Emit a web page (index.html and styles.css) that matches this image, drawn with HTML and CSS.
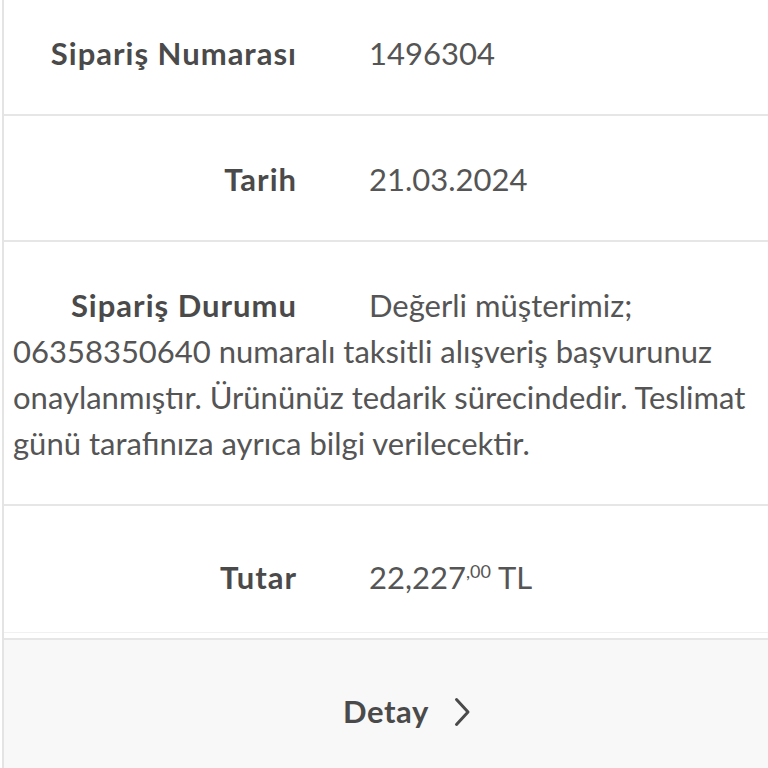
FILE: index.html
```html
<!DOCTYPE html>
<html lang="tr">
<head>
<meta charset="utf-8">
<link rel="stylesheet" href="styles.css">
</head>
<body>
<div class="card">
  <div class="row first">
    <span class="label">Sipariş Numarası</span><span class="value">1496304</span>
  </div>
  <div class="row">
    <span class="label">Tarih</span><span class="value">21.03.2024</span>
  </div>
  <div class="row">
    <span class="label">Sipariş Durumu</span><span class="value">Değerli müşterimiz;</span> <span class="value">06358350640 numaralı taksitli alışveriş başvurunuz onaylanmıştır. Ürününüz tedarik sürecindedir. Teslimat günü tarafınıza ayrıca bilgi verilecektir.</span>
  </div>
  <div class="row total">
    <span class="label">Tutar</span><span class="value">22,227<sup class="cents">,00</sup> TL</span>
  </div>
  <div class="footer">
    <span class="detail">Detay</span>
    <svg class="chev" width="17" height="30" viewBox="0 0 17 30"><path d="M2.5 2.5 L14 15 L2.5 27.5" fill="none" stroke="#4a4a4a" stroke-width="3" stroke-linecap="round" stroke-linejoin="round"/></svg>
  </div>
</div>
</body>
</html>
```

FILE: styles.css
```css
html, body {
  margin: 0;
  padding: 0;
  background: #ffffff;
}
body {
  font-family: "Lato", "Liberation Sans", sans-serif;
  color: #4f4f4f;
  overflow: hidden;
}
.card {
  margin-top: -10px;
  margin-left: 2px;
  border-left: 2px solid #e4e4e4;
}
.row {
  padding: 40px 2px 38px 9px;
  font-size: 31px;
  line-height: 46px;
  border-bottom: 2px solid #e6e6e6;
}
.label {
  display: inline-block;
  width: 283px;
  text-align: right;
  font-weight: 700;
  color: #4a4a4a;
  margin-right: 73px;
  letter-spacing: 1px;
}
.label::after {
  content: "";
  margin-right: -1px;
}
.value {
  color: #555555;
}
.cents {
  font-size: 18px;
  line-height: 0;
  vertical-align: 11px;
}
.total {
  padding-top: 48px;
  padding-bottom: 32px;
  border-bottom: 1px solid #f1f1f1;
  margin-bottom: 5px;
}
.footer {
  background: #f8f8f8;
  border-top: 2px solid #e6e6e6;
  height: 140px;
  display: flex;
  align-items: flex-start;
  justify-content: center;
  padding-top: 51px;
  padding-left: 42px;
  box-sizing: border-box;
  gap: 25px;
}
.detail {
  font-size: 31px;
  font-weight: 700;
  color: #4a4a4a;
  line-height: 40px;
  letter-spacing: 0.6px;
}
.chev {
  margin-top: 6px;
}
```
